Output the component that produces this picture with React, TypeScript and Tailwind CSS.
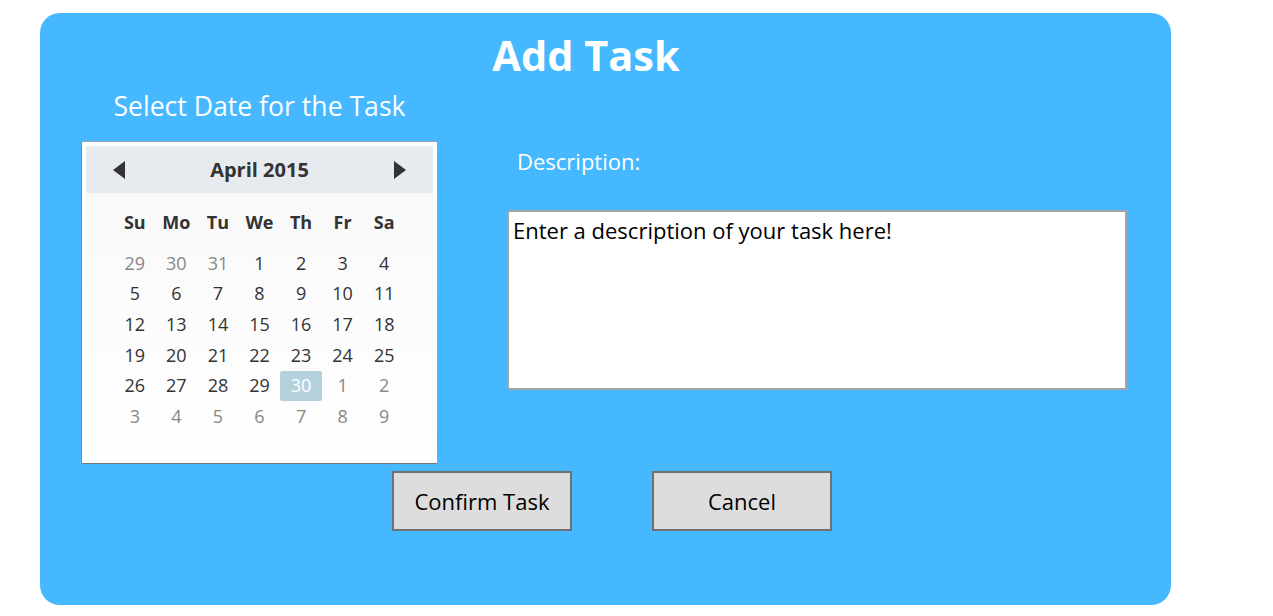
const prevMonth = [29, 30, 31];
const nextMonth = [1, 2, 3, 4, 5, 6, 7, 8, 9];

type Cell = { day: number; muted: boolean };

const cells: Cell[] = [
  ...prevMonth.map((d) => ({ day: d, muted: true })),
  ...Array.from({ length: 30 }, (_, i) => ({ day: i + 1, muted: false })),
  ...nextMonth.map((d) => ({ day: d, muted: true })),
];

const dayNames = ["Su", "Mo", "Tu", "We", "Th", "Fr", "Sa"];

const Calendar: React.FC = () => {
  return (
    <div className="w-[357px] h-[323px] rounded-[2px] border border-[#9aa1a8] border-l-[#7d848b] border-b-[#6f767d] bg-white p-[4px]">
      <div className="flex h-[47px] items-center justify-between bg-[#e7ebf0] px-[27px]">
        <svg width="12" height="18" viewBox="0 0 12 18">
          <polygon points="12,0 12,18 0,9" fill="#333333" />
        </svg>
        <span className="text-[20px] font-bold text-[#333333]">April 2015</span>
        <svg width="12" height="18" viewBox="0 0 12 18">
          <polygon points="0,0 0,18 12,9" fill="#333333" />
        </svg>
      </div>
      <div className="h-[266px] bg-gradient-to-b from-[#f9f9f9] to-white pt-[14px]">
        <div className="mx-auto grid w-[291px] grid-cols-7">
          {dayNames.map((n) => (
            <div
              key={n}
              className="flex h-[30px] items-center justify-center text-[18px] font-bold text-[#333333]"
            >
              {n}
            </div>
          ))}
        </div>
        <div className="mx-auto mt-[11px] grid w-[291px] grid-cols-7 auto-rows-[30.6px]">
          {cells.map((c, i) => {
            const selected = !c.muted && c.day === 30;
            return (
              <div key={i} className="flex items-center justify-center">
                <span
                  className={
                    selected
                      ? "flex h-[30px] w-[42px] items-center justify-center rounded-[2px] bg-[#b5d2dc] text-[18px] text-white"
                      : c.muted
                      ? "text-[18px] text-[#888888]"
                      : "text-[18px] text-[#333333]"
                  }
                >
                  {c.day}
                </span>
              </div>
            );
          })}
        </div>
      </div>
    </div>
  );
};

export default function App() {
  return (
    <div className="min-h-[616px] bg-white pt-[13px] pl-[40px] font-['Open_Sans','Noto_Sans',sans-serif]">
      <div className="flex h-[592px] w-[1131px] flex-col rounded-[20px] bg-[#45b8ff]">
        <h1 className="mt-[14px] pr-[39px] text-center text-[41.5px] leading-[56px] font-bold text-white">
          Add Task
        </h1>
        <div className="flex pl-[41px]">
          <div className="flex flex-col">
            <p className="mt-[8px] text-center text-[26.6px] leading-[30px] text-white">
              Select Date for the Task
            </p>
            <div className="mt-[20px]">
              <Calendar />
            </div>
          </div>
          <div className="ml-[69px] flex flex-col">
            <p className="mt-[65px] pl-[10px] text-[22px] leading-[26px] text-white">
              Description:
            </p>
            <div className="mt-[36px] h-[180px] w-[620px] border-2 border-[#a3a3a3] bg-white px-[4px] pt-[3px] text-[22px] leading-[30px] text-black">
              Enter a description of your task here!
            </div>
          </div>
        </div>
        <div className="mt-[7px] flex gap-[80px] pl-[352px]">
          <button className="h-[60px] w-[180px] border-2 border-[#707070] bg-[#dddddd] text-[22px] text-black">
            Confirm Task
          </button>
          <button className="h-[60px] w-[180px] border-2 border-[#707070] bg-[#dddddd] text-[22px] text-black">
            Cancel
          </button>
        </div>
      </div>
    </div>
  );
}
